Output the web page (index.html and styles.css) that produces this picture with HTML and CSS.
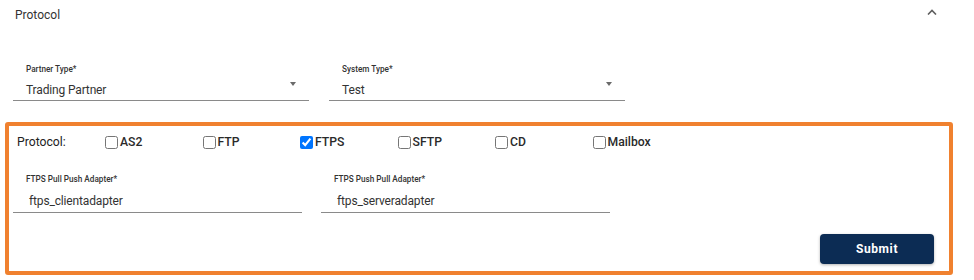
FILE: index.html
```html
<!DOCTYPE html>
<html lang="en">
<head>
  <meta charset="UTF-8">
  <title>Protocol</title>
  <link rel="stylesheet" href="styles.css">
</head>
<body>

  <!-- panel header -->
  <div class="panel-head">
    <span class="panel-title">Protocol</span>
    <svg class="chevron" width="10" height="6" viewBox="0 0 10 6">
      <path d="M1 5.5 L5 1.5 L9 5.5" fill="none" stroke="#5f5f5f" stroke-width="1.6"/>
    </svg>
  </div>

  <!-- partner / system selects -->
  <div class="select-row">
    <div class="field select-field">
      <label class="field-label">Partner Type*</label>
      <div class="field-value">
        <span>Trading Partner</span>
        <span class="caret"></span>
      </div>
    </div>
    <div class="field select-field">
      <label class="field-label">System Type*</label>
      <div class="field-value">
        <span>Test</span>
        <span class="caret"></span>
      </div>
    </div>
  </div>

  <!-- protocol box -->
  <form class="protocol-box">
    <div class="protocol-row">
      <span class="protocol-label">Protocol:</span>
      <label class="option"><input type="checkbox">AS2</label>
      <label class="option"><input type="checkbox">FTP</label>
      <label class="option"><input type="checkbox" checked>FTPS</label>
      <label class="option"><input type="checkbox">SFTP</label>
      <label class="option"><input type="checkbox">CD</label>
      <label class="option"><input type="checkbox">Mailbox</label>
    </div>

    <div class="adapter-row">
      <div class="field adapter-field">
        <label class="field-label">FTPS Pull Push Adapter*</label>
        <div class="field-value">ftps_clientadapter</div>
      </div>
      <div class="field adapter-field">
        <label class="field-label">FTPS Push Pull Adapter*</label>
        <div class="field-value">ftps_serveradapter</div>
      </div>
    </div>

    <div class="actions">
      <button type="button" class="submit-btn">Submit</button>
    </div>
  </form>

</body>
</html>
```

FILE: styles.css
```css
body {
  margin: 0;
  font-family: Roboto, "Liberation Sans", sans-serif;
  background: #fff;
  color: #222;
}
.panel-head {
  height: 30px;
  padding: 0 37px 0 15px;
  display: flex;
  align-items: center;
  justify-content: space-between;
}
.panel-title {
  font-size: 12px;
  color: #333;
}
.chevron {
  margin-top: -6px;
}
.select-row {
  display: flex;
  gap: 20px;
  margin: 32px 0 0 13px;
}
.field {
  border-bottom: 1px solid #8a8a8a;
}
.select-field {
  width: 296px;
  padding-left: 13px;
  box-sizing: border-box;
}
.field-label {
  display: block;
  height: 14px;
  line-height: 14px;
  font-size: 8.2px;
  font-weight: 500;
  color: #333;
}
.field-value {
  display: flex;
  justify-content: space-between;
  height: 20px;
  padding-top: 4px;
  line-height: 20px;
  font-size: 12px;
  letter-spacing: -0.15px;
  color: #333;
}
.caret {
  width: 0;
  height: 0;
  margin: 2px 13px 0 0;
  border-left: 3.5px solid transparent;
  border-right: 3.5px solid transparent;
  border-top: 4px solid #6a6a6a;
}
.protocol-box {
  margin: 21px 21px 0 5px;
  border: 4px solid #f0812f;
  border-radius: 3px;
  padding: 6px 15px 7px 4px;
}
.protocol-row {
  display: flex;
  align-items: center;
  height: 20px;
  padding-left: 4px;
  font-size: 12.2px;
}
.protocol-label {
  width: 87px;
  color: #222;
}
.option {
  width: 97.5px;
  display: flex;
  align-items: center;
  font-weight: 500;
  color: #2a2a2a;
}
.option input {
  width: 13px;
  height: 13px;
  margin: 0 2px 0 1px;
}
.adapter-row {
  display: flex;
  gap: 19px;
  margin-top: 20px;
}
.adapter-field {
  width: 289px;
  padding-left: 13px;
  box-sizing: border-box;
}
.adapter-field .field-value {
  height: 22px;
  line-height: 22px;
  padding-left: 3px;
}
.actions {
  display: flex;
  justify-content: flex-end;
  margin-top: 21px;
}
.submit-btn {
  width: 114px;
  height: 30px;
  border: none;
  border-radius: 4px;
  background: #0c2c54;
  color: #fff;
  font-family: Roboto, "Liberation Sans", sans-serif;
  font-size: 12px;
  font-weight: 700;
  letter-spacing: 0.6px;
  box-shadow: 0 1px 3px rgba(0, 0, 0, 0.3);
  cursor: pointer;
}
```
